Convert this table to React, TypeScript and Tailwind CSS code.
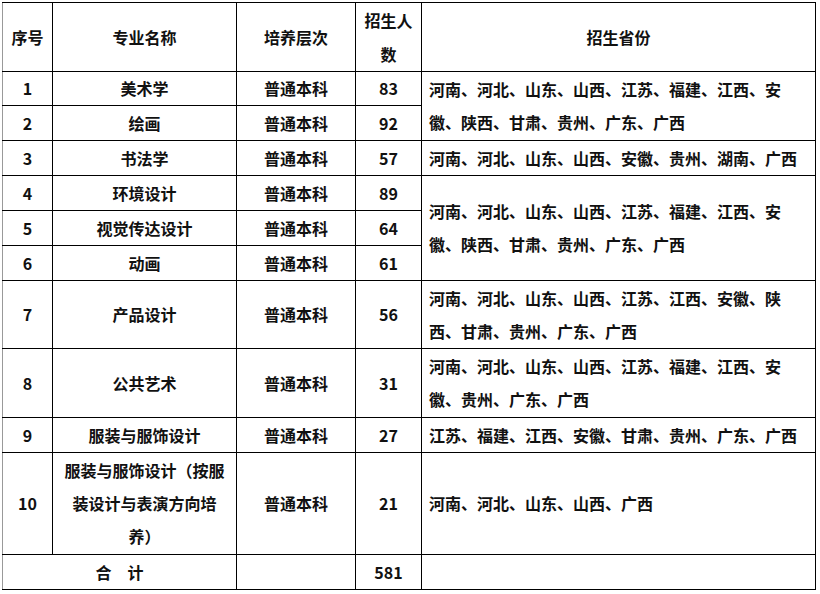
import React from 'react';

type Row = {
  no: string;
  name: string;
  level: string;
  count: string;
  height: string;
  provinces?: { text: string; span: number };
};

const rows: Row[] = [
  { no: '1', name: '美术学', level: '普通本科', count: '83', height: 'h-[34px]', provinces: { text: '河南、河北、山东、山西、江苏、福建、江西、安徽、陕西、甘肃、贵州、广东、广西', span: 2 } },
  { no: '2', name: '绘画', level: '普通本科', count: '92', height: 'h-[35px]' },
  { no: '3', name: '书法学', level: '普通本科', count: '57', height: 'h-[35px]', provinces: { text: '河南、河北、山东、山西、安徽、贵州、湖南、广西', span: 1 } },
  { no: '4', name: '环境设计', level: '普通本科', count: '89', height: 'h-[35px]', provinces: { text: '河南、河北、山东、山西、江苏、福建、江西、安徽、陕西、甘肃、贵州、广东、广西', span: 3 } },
  { no: '5', name: '视觉传达设计', level: '普通本科', count: '64', height: 'h-[35px]' },
  { no: '6', name: '动画', level: '普通本科', count: '61', height: 'h-[35px]' },
  { no: '7', name: '产品设计', level: '普通本科', count: '56', height: 'h-[68px]', provinces: { text: '河南、河北、山东、山西、江苏、江西、安徽、陕西、甘肃、贵州、广东、广西', span: 1 } },
  { no: '8', name: '公共艺术', level: '普通本科', count: '31', height: 'h-[69px]', provinces: { text: '河南、河北、山东、山西、江苏、福建、江西、安徽、贵州、广东、广西', span: 1 } },
  { no: '9', name: '服装与服饰设计', level: '普通本科', count: '27', height: 'h-[35px]', provinces: { text: '江苏、福建、江西、安徽、甘肃、贵州、广东、广西', span: 1 } },
  { no: '10', name: '服装与服饰设计（按服装设计与表演方向培养）', level: '普通本科', count: '21', height: 'h-[102px]', provinces: { text: '河南、河北、山东、山西、广西', span: 1 } },
];

const cell = 'border border-black px-[5px] py-0 align-middle text-center';

export default function App() {
  return (
    <div className="w-[820px] h-[594px] bg-white pt-[2px] pl-[2px]">
      <table
        className="table-fixed border-collapse w-[814px] text-[16px] font-bold text-[#111] leading-[33px] [text-spacing-trim:space-all]"
        style={{ fontFamily: '"Noto Sans CJK SC", "Noto Sans", sans-serif' }}
      >
        <colgroup>
          <col className="w-[50px]" />
          <col className="w-[184px]" />
          <col className="w-[119px]" />
          <col className="w-[66px]" />
          <col className="w-[394px]" />
        </colgroup>
        <tbody>
          <tr className="h-[68px]">
            <td className={`${cell} border-l-[#999]`}>序号</td>
            <td className={cell}>专业名称</td>
            <td className={cell}>培养层次</td>
            <td className={`${cell} leading-[34px]`}>招生人数</td>
            <td className={cell}>招生省份</td>
          </tr>
          {rows.map((r) => (
            <tr key={r.no} className={r.height}>
              <td className={`${cell} border-l-[#999]`}>{r.no}</td>
              <td className={cell}>{r.name}</td>
              <td className={cell}>{r.level}</td>
              <td className={cell}>{r.count}</td>
              {r.provinces && (
                <td
                  rowSpan={r.provinces.span}
                  className="border border-black pl-[7px] pr-[8px] py-0 align-middle text-left"
                >
                  {r.provinces.text}
                </td>
              )}
            </tr>
          ))}
          <tr className="h-[35px]">
            <td colSpan={2} className={`${cell} border-l-[#999]`}>合　计</td>
            <td className={cell}></td>
            <td className={cell}>581</td>
            <td className={cell}></td>
          </tr>
        </tbody>
      </table>
    </div>
  );
}
